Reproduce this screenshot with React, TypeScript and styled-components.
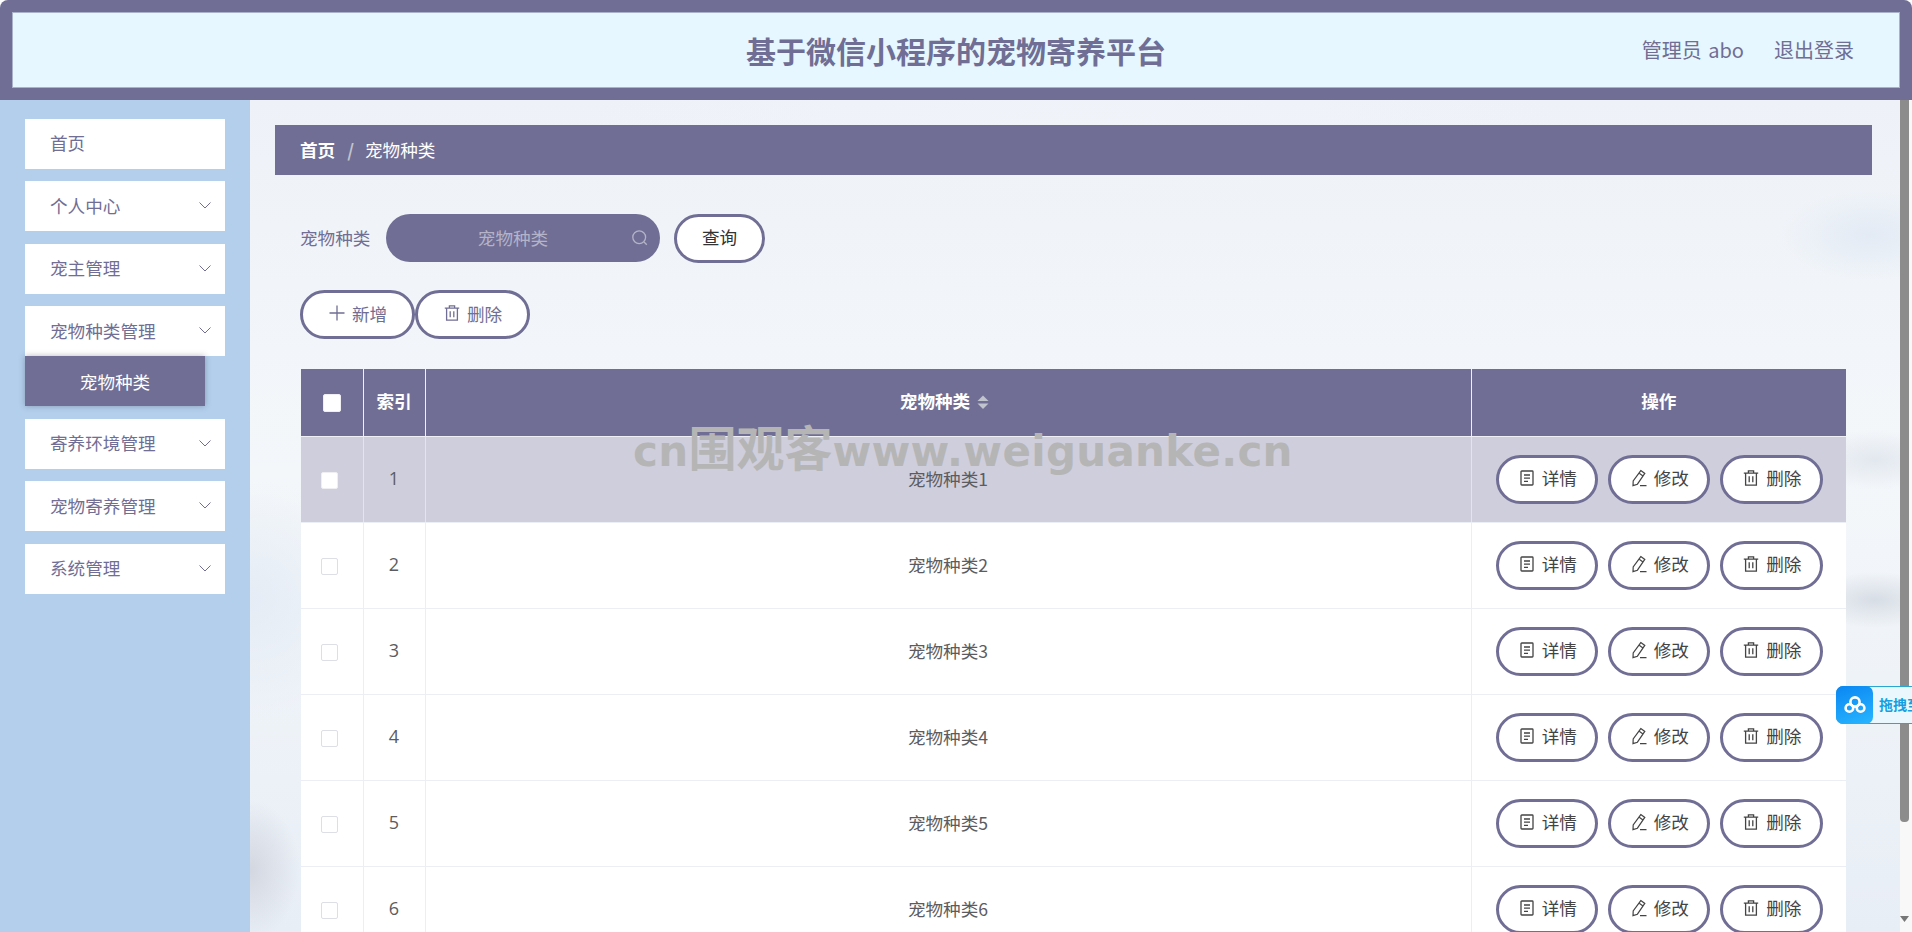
import styled, { createGlobalStyle } from 'styled-components';

const PURPLE = '#706e94';
const FONT = '"Noto Sans CJK SC", "Noto Sans", sans-serif';

const GlobalStyle = createGlobalStyle`
  html, body {
    margin: 0;
    height: 100%;
    overflow: hidden;
    background: #fff;
    font-family: ${FONT};
  }
  * { box-sizing: border-box; }
`;

const Page = styled.div`
  position: relative;
  width: 100vw;
  height: 100vh;
  display: flex;
  flex-direction: column;
  overflow: hidden;
`;

const Header = styled.header`
  flex: 0 0 100px;
  background: ${PURPLE};
  padding: 12px;
  border-radius: 8px 8px 0 0;
`;

const HeaderInner = styled.div`
  position: relative;
  height: 76px;
  background: #e6f7ff;
  border: 1px solid #a9b1cb;
  display: flex;
  align-items: center;
  justify-content: center;
`;

const Title = styled.h1`
  margin: 0;
  font-size: 30px;
  font-weight: 700;
  line-height: 1;
  color: ${PURPLE};
`;

const UserBox = styled.div`
  position: absolute;
  right: 45px;
  top: 0;
  bottom: 2px;
  display: flex;
  align-items: center;
  gap: 30px;
  font-size: 20px;
  word-spacing: 2px;
  color: ${PURPLE};
`;

const Body = styled.div`
  flex: 1;
  display: flex;
  min-height: 0;
`;

const Sidebar = styled.aside`
  flex: 0 0 250px;
  background: #b3cfec;
  padding: 18.7px 25px 0;
`;

const MenuItem = styled.div`
  width: 200px;
  height: 50px;
  margin-bottom: 12.5px;
  padding: 0 13px 2px 25px;
  background: #fff;
  color: ${PURPLE};
  font-size: 17.6px;
  display: flex;
  align-items: center;
  justify-content: space-between;
`;

const MenuGroup = styled.div`
  margin-bottom: 12.5px;
  ${MenuItem} { margin-bottom: 0; }
`;

const SubItem = styled.div`
  position: relative;
  width: 180px;
  height: 50px;
  background: ${PURPLE};
  color: #fff;
  font-size: 17.6px;
  display: flex;
  align-items: center;
  justify-content: center;
  box-shadow: 0 0 6px rgba(50, 50, 70, 0.35);
`;

const Main = styled.main`
  flex: 1;
  min-width: 0;
  overflow: hidden;
  padding: 25px 28px 0 25px;
  background:
    radial-gradient(ellipse 90px 45px at 1620px 135px, rgba(226, 234, 244, 0.95), transparent),
    radial-gradient(ellipse 70px 30px at 1625px 360px, rgba(222, 228, 236, 0.8), transparent),
    radial-gradient(ellipse 70px 28px at 1625px 500px, rgba(214, 220, 228, 0.95), transparent),
    radial-gradient(ellipse 50px 70px at 0px 770px, rgba(208, 212, 222, 0.9), transparent),
    radial-gradient(ellipse 120px 120px at 0px 500px, rgba(226, 234, 244, 0.8), transparent),
    radial-gradient(ellipse 500px 160px at 50% 40px, #f0f3f8, transparent),
    linear-gradient(180deg, #eef2f8 0%, #f4f7fa 45%, #e8eef6 100%);
`;

const Breadcrumb = styled.nav`
  height: 50px;
  padding: 0 0 2px 25px;
  background: ${PURPLE};
  color: #fff;
  font-size: 17.6px;
  display: flex;
  align-items: center;
`;

const Crumb = styled.span<{ $strong?: boolean }>`
  font-weight: ${(p) => (p.$strong ? 700 : 400)};
`;

const CrumbSep = styled.span`
  margin: 0 11px 0 12px;
  color: #c0c4cc;
  font-weight: 700;
`;

const SearchRow = styled.div`
  margin-top: 39px;
  padding-left: 25px;
  height: 48px;
  display: flex;
  align-items: center;
`;

const SearchLabel = styled.label`
  width: 86px;
  padding-bottom: 2px;
  font-size: 17.6px;
  color: ${PURPLE};
`;

const SearchField = styled.div`
  position: relative;
  width: 274px;
  height: 48px;
  padding: 0 20px 2px 0;
  border-radius: 24px;
  background: ${PURPLE};
  color: #b4b3c8;
  font-size: 17.6px;
  display: flex;
  align-items: center;
  justify-content: center;
`;

const SearchIcon = styled.svg`
  position: absolute;
  right: 11px;
  top: 15px;
  width: 18px;
  height: 18px;
`;

const PillButton = styled.button<{ $w: number; $tone?: 'purple' | 'dark' }>`
  width: ${(p) => p.$w}px;
  height: 49px;
  padding: 0 0 3px;
  border: 3px solid ${PURPLE};
  border-radius: 25px;
  background: #fff;
  color: ${(p) => (p.$tone === 'purple' ? PURPLE : '#444')};
  font-family: ${FONT};
  font-size: 17.6px;
  display: inline-flex;
  align-items: center;
  justify-content: center;
  gap: 6px;
  svg { width: 18px; height: 18px; flex: none; }
`;

const SearchButton = styled(PillButton)`
  margin-left: 14px;
  color: #333;
`;

const ActionRow = styled.div`
  margin-top: 28px;
  padding-left: 25px;
  display: flex;
`;

const Table = styled.table`
  margin: 30px 0 0 26px;
  width: 1545px;
  table-layout: fixed;
  border-collapse: collapse;
`;

const HeadCell = styled.th<{ $w?: number }>`
  width: ${(p) => (p.$w ? `${p.$w}px` : 'auto')};
  height: 67px;
  padding: 0 0 3px;
  background: ${PURPLE};
  color: #fff;
  font-size: 17.6px;
  font-weight: 700;
  text-align: center;
  border-right: 1px solid #eef0f6;
  border-bottom: 1px solid #eef0f6;
  &:last-child { border-right: 0; }
`;

const SortableHead = styled(HeadCell)`
  padding-right: 6px;
`;

const SortCarets = styled.svg`
  display: inline-block;
  width: 14px;
  height: 16px;
  margin-left: 6px;
  vertical-align: -2px;
`;

const Row = styled.tr<{ $active?: boolean }>`
  height: 86px;
  background: ${(p) => (p.$active ? '#cfcedd' : '#fff')};
`;

const Cell = styled.td<{ $active?: boolean }>`
  padding: 0 0 2px;
  text-align: center;
  color: #5c5c60;
  font-size: 17.6px;
  border-right: 1px solid ${(p) => (p.$active ? '#e4e4ec' : '#ebeef5')};
  border-bottom: 1px solid #ebeef5;
  &:last-child { border-right: 0; }
`;

const ActionCell = styled(Cell)`
  padding: 0;
`;

const IndexCell = styled(Cell)`
  font-size: 18px;
  font-family: "Open Sans", "Noto Sans", sans-serif;
`;

const Check = styled.span<{ $head?: boolean; $active?: boolean }>`
  display: inline-block;
  width: ${(p) => (p.$head ? 18 : 17)}px;
  height: ${(p) => (p.$head ? 18 : 17)}px;
  margin: ${(p) => (p.$head ? '0' : '0 5px 0 0')};
  vertical-align: middle;
  background: #fff;
  border: 1px solid ${(p) => (p.$head || p.$active ? '#eeeef3' : '#dcdfe6')};
  border-radius: 2px;
`;

const RowActions = styled.div`
  display: flex;
  justify-content: center;
  gap: 10px;
  padding-left: 2px;
`;

const RailColumn = styled.div`
  flex: 0 0 12px;
  position: relative;
  background: #f8f8f9;
  display: flex;
  flex-direction: column;
`;

const Thumb = styled.div`
  width: 9px;
  height: 722px;
  background: #8c8c8c;
  border-radius: 0 0 4px 4px;
`;

const RailArrow = styled.svg`
  position: absolute;
  left: 0;
  bottom: 10px;
  width: 9px;
  height: 6px;
`;

const Watermark = styled.div`
  position: absolute;
  left: 633px;
  top: 415px;
  font-family: "DejaVu Sans", "Noto Sans CJK SC", sans-serif;
  font-size: 42px;
  font-weight: 700;
  line-height: 60px;
  letter-spacing: 0.3px;
  color: #b5b5b5;
  white-space: nowrap;
  pointer-events: none;
`;

const WatermarkCjk = styled.span`
  font-family: "Noto Sans CJK SC", sans-serif;
  font-size: 48px;
  letter-spacing: 0;
`;

const DropWidget = styled.div`
  position: absolute;
  left: 1836px;
  top: 686px;
  width: 140px;
  height: 38px;
  display: flex;
  background: #eaf8fd;
  border: 1px solid #2aa6d2;
  border-radius: 7px;
`;

const DropIcon = styled.div`
  flex: 0 0 37px;
  margin: -1px 0 -1px -1px;
  border-radius: 7px;
  background: linear-gradient(160deg, #0a86f2, #28b6ff);
  display: flex;
  align-items: center;
  justify-content: center;
  svg { width: 24px; height: 20px; }
`;

const DropText = styled.span`
  margin-left: 6px;
  font-size: 14px;
  font-weight: 700;
  line-height: 34px;
  color: #169fe0;
  white-space: nowrap;
`;

const Chevron = () => (
  <svg width="14" height="14" viewBox="0 0 14 14" fill="none" stroke={PURPLE} strokeWidth="1">
    <path d="M1.5 4.5 7 10l5.5-5.5" />
  </svg>
);

const IconTickets = () => (
  <svg viewBox="0 0 18 18" fill="none" stroke="currentColor" strokeWidth="1.3">
    <rect x="3" y="2" width="12" height="14" rx="0.8" />
    <path d="M6 6h6M6 9.2h6M6 12.4h4" />
  </svg>
);

const IconEdit = () => (
  <svg viewBox="0 0 18 18" fill="none" stroke="currentColor" strokeWidth="1.2">
    <path d="M10.8 1.6 14.8 4.4 7.4 15.2l-4.4 1.4.2-4.6z" />
    <path d="M9.2 4.2 13 7M10 16.6h6.5" />
  </svg>
);

const IconTrash = () => (
  <svg viewBox="0 0 18 18" fill="none" stroke="currentColor" strokeWidth="1.3">
    <path d="M1.8 4.2h14.4M6.4 4.2V1.8h5.2v2.4M3.6 4.2v12h10.8v-12M7.2 7.2v6M10.8 7.2v6" />
  </svg>
);

const IconPlus = () => (
  <svg viewBox="0 0 18 18" fill="none" stroke="currentColor" strokeWidth="1.3">
    <path d="M9 1.5v15M1.5 9h15" />
  </svg>
);

const menu = ['个人中心', '宠主管理'];
const menuAfter = ['寄养环境管理', '宠物寄养管理', '系统管理'];
const rows = [1, 2, 3, 4, 5, 6];

export default function App() {
  return (
    <Page>
      <GlobalStyle />
      <Header>
        <HeaderInner>
          <Title>基于微信小程序的宠物寄养平台</Title>
          <UserBox>
            <span>管理员 abo</span>
            <span>退出登录</span>
          </UserBox>
        </HeaderInner>
      </Header>
      <Body>
        <Sidebar>
          <MenuItem>首页</MenuItem>
          {menu.map((m) => (
            <MenuItem key={m}>
              {m}
              <Chevron />
            </MenuItem>
          ))}
          <MenuGroup>
            <MenuItem>
              宠物种类管理
              <Chevron />
            </MenuItem>
            <SubItem>宠物种类</SubItem>
          </MenuGroup>
          {menuAfter.map((m) => (
            <MenuItem key={m}>
              {m}
              <Chevron />
            </MenuItem>
          ))}
        </Sidebar>
        <Main>
          <Breadcrumb>
            <Crumb $strong>首页</Crumb>
            <CrumbSep>/</CrumbSep>
            <Crumb>宠物种类</Crumb>
          </Breadcrumb>
          <SearchRow>
            <SearchLabel>宠物种类</SearchLabel>
            <SearchField>
              宠物种类
              <SearchIcon viewBox="0 0 18 18" fill="none" stroke="#b4b3c8" strokeWidth="1.3">
                <circle cx="8.2" cy="8.2" r="6.4" />
                <path d="m13 13 2.8 2.8" />
              </SearchIcon>
            </SearchField>
            <SearchButton $w={91}>查询</SearchButton>
          </SearchRow>
          <ActionRow>
            <PillButton $w={115} $tone="purple">
              <IconPlus />
              新增
            </PillButton>
            <PillButton $w={115} $tone="purple">
              <IconTrash />
              删除
            </PillButton>
          </ActionRow>
          <Table>
            <thead>
              <tr>
                <HeadCell $w={62}>
                  <Check $head />
                </HeadCell>
                <HeadCell $w={62}>索引</HeadCell>
                <SortableHead>
                  宠物种类
                  <SortCarets viewBox="0 0 14 16">
                    <path d="M7 1.5 12.5 7h-11z" fill="#c0c4cc" />
                    <path d="M7 15 12.5 9.5h-11z" fill="#c0c4cc" />
                  </SortCarets>
                </SortableHead>
                <HeadCell $w={375}>操作</HeadCell>
              </tr>
            </thead>
            <tbody>
              {rows.map((n) => {
                const active = n === 1;
                return (
                  <Row key={n} $active={active}>
                    <Cell $active={active}>
                      <Check $active={active} />
                    </Cell>
                    <IndexCell $active={active}>{n}</IndexCell>
                    <Cell $active={active}>宠物种类{n}</Cell>
                    <ActionCell $active={active}>
                      <RowActions>
                        <PillButton $w={102}>
                          <IconTickets />
                          详情
                        </PillButton>
                        <PillButton $w={102}>
                          <IconEdit />
                          修改
                        </PillButton>
                        <PillButton $w={103}>
                          <IconTrash />
                          删除
                        </PillButton>
                      </RowActions>
                    </ActionCell>
                  </Row>
                );
              })}
            </tbody>
          </Table>
        </Main>
        <RailColumn>
          <Thumb />
          <RailArrow viewBox="0 0 9 6">
            <path d="M0 0h9L4.5 6z" fill="#777" />
          </RailArrow>
        </RailColumn>
      </Body>
      <Watermark>
        cn<WatermarkCjk>围观客</WatermarkCjk>www.weiguanke.cn
      </Watermark>
      <DropWidget>
        <DropIcon>
          <svg viewBox="0 0 24 20" fill="none" stroke="#fff" strokeWidth="2.6">
            <circle cx="12" cy="7" r="4.6" />
            <circle cx="6.4" cy="13" r="3.8" />
            <circle cx="17.6" cy="13" r="3.8" />
          </svg>
        </DropIcon>
        <DropText>拖拽至此处</DropText>
      </DropWidget>
    </Page>
  );
}
